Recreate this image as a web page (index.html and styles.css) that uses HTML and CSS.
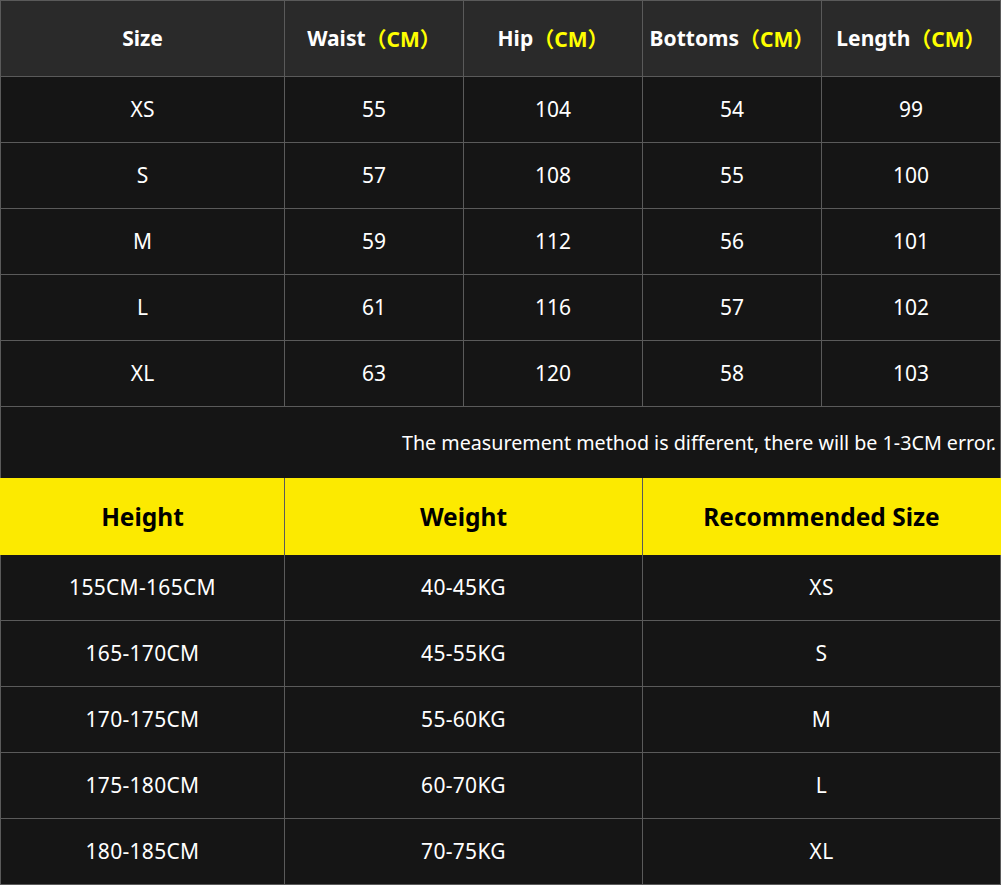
FILE: index.html
```html
<!DOCTYPE html>
<html>
<head>
<meta charset="utf-8">
<link rel="stylesheet" href="styles.css">
</head>
<body>
<div class="chart">
  <div class="grid top">
    <div class="cell head">Size</div>
    <div class="cell head">Waist<span class="unit">（CM）</span></div>
    <div class="cell head">Hip<span class="unit">（CM）</span></div>
    <div class="cell head">Bottoms<span class="unit">（CM）</span></div>
    <div class="cell head">Length<span class="unit">（CM）</span></div>

    <div class="cell">XS</div><div class="cell">55</div><div class="cell">104</div><div class="cell">54</div><div class="cell">99</div>
    <div class="cell">S</div><div class="cell">57</div><div class="cell">108</div><div class="cell">55</div><div class="cell">100</div>
    <div class="cell">M</div><div class="cell">59</div><div class="cell">112</div><div class="cell">56</div><div class="cell">101</div>
    <div class="cell">L</div><div class="cell">61</div><div class="cell">116</div><div class="cell">57</div><div class="cell">102</div>
    <div class="cell">XL</div><div class="cell">63</div><div class="cell">120</div><div class="cell">58</div><div class="cell">103</div>
  </div>

  <div class="note">The measurement method is different, there will be 1-3CM error.</div>

  <div class="grid yellowhead">
    <div class="cell yhead">Height</div>
    <div class="cell yhead">Weight</div>
    <div class="cell yhead">Recommended Size</div>
  </div>

  <div class="grid bottom">
    <div class="cell">155CM-165CM</div><div class="cell">40-45KG</div><div class="cell">XS</div>
    <div class="cell">165-170CM</div><div class="cell">45-55KG</div><div class="cell">S</div>
    <div class="cell">170-175CM</div><div class="cell">55-60KG</div><div class="cell">M</div>
    <div class="cell">175-180CM</div><div class="cell">60-70KG</div><div class="cell">L</div>
    <div class="cell">180-185CM</div><div class="cell">70-75KG</div><div class="cell">XL</div>
  </div>
</div>
</body>
</html>
```

FILE: styles.css
```css
html, body {
  margin: 0;
  padding: 0;
  background: #151515;
}
body {
  font-family: "Noto Sans", "Noto Sans CJK SC", sans-serif;
  color: #ffffff;
}
.chart {
  width: 1001px;
  height: 885px;
  display: flex;
  flex-direction: column;
}
.grid {
  display: grid;
  gap: 1px;
  background: #5a5a5a;
  border-left: 1px solid #5a5a5a;
  border-right: 1px solid #5a5a5a;
}
.top {
  grid-template-columns: 283px repeat(4, 178px);
  grid-template-rows: 75px repeat(5, 65px);
  border-top: 1px solid #5a5a5a;
  border-bottom: 1px solid #5a5a5a;
}
.cell {
  background: #151515;
  display: flex;
  align-items: center;
  justify-content: center;
  font-size: 21px;
  white-space: nowrap;
  padding-bottom: 1px;
  box-sizing: border-box;
}
.bottom .cell {
  letter-spacing: 0.3px;
}
.head {
  background: #2a2a2a;
  font-weight: 700;
  font-size: 21px;
  padding-bottom: 2px;
}
.unit {
  color: #ffff00;
}
.note {
  height: 71px;
  box-sizing: border-box;
  display: flex;
  align-items: center;
  justify-content: flex-end;
  padding-right: 4px;
  padding-bottom: 1px;
  font-size: 19.7px;
  background: #151515;
  border-left: 1px solid #5a5a5a;
  border-right: 1px solid #5a5a5a;
}
.yellowhead {
  grid-template-columns: 283px 357px 357px;
  grid-template-rows: 77px;
  border-left-color: #fcea00;
  border-right-color: #fcea00;
}
.yhead {
  background: #fcea00;
  color: #000000;
  font-weight: 700;
  font-size: 24.5px;
  padding-bottom: 0;
}
.bottom {
  grid-template-columns: 283px 357px 357px;
  grid-template-rows: repeat(5, 65px);
  border-bottom: 1px solid #5a5a5a;
}
```
